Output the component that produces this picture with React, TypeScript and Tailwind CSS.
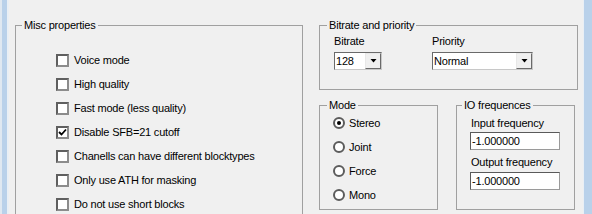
import React from "react";

const miscOptions = [
  { label: "Voice mode", checked: false },
  { label: "High quality", checked: false },
  { label: "Fast mode (less quality)", checked: false },
  { label: "Disable SFB=21 cutoff", checked: true },
  { label: "Chanells can have different blocktypes", checked: false },
  { label: "Only use ATH for masking", checked: false },
  { label: "Do not use short blocks", checked: false },
];

const modes = ["Stereo", "Joint", "Force", "Mono"];

const Check = ({ checked }: { checked: boolean }) => (
  <div className="flex h-[13px] w-[13px] shrink-0 items-center justify-center border-2 border-t-[#5f5f5f] border-l-[#5f5f5f] border-r-[#8c8c8c] border-b-[#8c8c8c] bg-white">
    {checked && (
      <svg width="9" height="9" viewBox="0 0 9 9">
        <path d="M1 4 L3.5 6.5 L8 1.5" stroke="#000" strokeWidth="1.8" fill="none" />
      </svg>
    )}
  </div>
);

const Radio = ({ checked }: { checked: boolean }) => (
  <div className="flex h-[12px] w-[12px] shrink-0 items-center justify-center rounded-full border-2 border-[#5c5c5c] bg-white">
    {checked && <div className="h-[4px] w-[4px] rounded-full bg-black" />}
  </div>
);

const Combo = ({ value, width }: { value: string; width: string }) => (
  <div className={`flex h-[18px] ${width} border border-t-[#6a6a6a] border-l-[#6a6a6a] border-r-[#c8c8c8] border-b-[#c8c8c8] bg-white`}>
    <div className="flex-1 pl-[1px] leading-[16px]">{value}</div>
    <div className="flex w-[16px] items-center justify-center border border-t-[#e8e8e8] border-l-[#e8e8e8] border-r-[#6a6a6a] border-b-[#6a6a6a] bg-[#f0f0f0]">
      <svg width="7" height="4" viewBox="0 0 7 4">
        <path d="M0.5 0 H6.5 L3.5 3.5 Z" fill="#000" />
      </svg>
    </div>
  </div>
);

const Edit = ({ value }: { value: string }) => (
  <div className="ml-[13px] h-[18px] w-[90px] border border-t-[#5a5a5a] border-l-[#5a5a5a] border-r-[#9a9a9a] border-b-[#9a9a9a] bg-white pl-[1px] leading-[16px]">
    {value}
  </div>
);

const Legend = ({ children, ml }: { children: React.ReactNode; ml: string }) => (
  <legend className={`${ml} px-[2px] leading-[13px]`}>{children}</legend>
);

export default function App() {
  return (
    <div className="flex h-[214px] w-[592px] overflow-hidden bg-[#f0f0f0] font-['Liberation_Sans',Arial,sans-serif] text-[11px] tracking-[-0.2px] text-black">
      <div className="flex w-[9px] shrink-0">
        <div className="w-[2px] bg-[#dfe8f1]" />
        <div className="w-[5px] bg-[#b9d1ea]" />
        <div className="w-[2px] bg-[#e9eff5]" />
      </div>

      <div className="flex flex-1 gap-[16px] pl-[6px] pt-[19px]">
        <fieldset className="h-[220px] w-[288px] shrink-0 border border-[#a0a0a0]">
          <Legend ml="ml-[6px]">Misc properties</Legend>
          <div className="mt-[16px] flex flex-col">
            {miscOptions.map((o) => (
              <div key={o.label} className="flex h-[24px] items-center gap-[5px] pl-[40px]">
                <Check checked={o.checked} />
                <span>{o.label}</span>
              </div>
            ))}
          </div>
        </fieldset>

        <div className="flex w-[259px] shrink-0 flex-col">
          <fieldset className="h-[71px] border border-[#a0a0a0]">
            <Legend ml="ml-[7px]">Bitrate and priority</Legend>
            <div className="flex pl-[14px]">
              <div className="flex w-[98px] flex-col">
                <div className="mt-[3px] leading-[13px]">Bitrate</div>
                <div className="mt-[4px]">
                  <Combo value="128" width="w-[48px]" />
                </div>
              </div>
              <div className="flex flex-col">
                <div className="mt-[3px] leading-[13px]">Priority</div>
                <div className="mt-[4px]">
                  <Combo value="Normal" width="w-[101px]" />
                </div>
              </div>
            </div>
          </fieldset>

          <div className="mt-[9px] flex gap-[18px]">
            <fieldset className="h-[111px] w-[119px] border border-[#a0a0a0]">
              <Legend ml="ml-[7px]">Mode</Legend>
              <div className="flex flex-col gap-[2px]">
                {modes.map((m, i) => (
                  <div key={m} className="flex h-[22px] items-center gap-[4px] pl-[13px]">
                    <Radio checked={i === 0} />
                    <span>{m}</span>
                  </div>
                ))}
              </div>
            </fieldset>

            <fieldset className="h-[111px] w-[119px] border border-[#a0a0a0]">
              <Legend ml="ml-[5px]">IO frequences</Legend>
              <div className="flex flex-col">
                <div className="ml-[14px] mt-[5px] leading-[13px]">Input frequency</div>
                <div className="mt-[2px]">
                  <Edit value="-1.000000" />
                </div>
                <div className="ml-[14px] mt-[6px] leading-[13px]">Output frequency</div>
                <div className="mt-[3px]">
                  <Edit value="-1.000000" />
                </div>
              </div>
            </fieldset>
          </div>
        </div>
      </div>

      <div className="flex w-[9px] shrink-0">
        <div className="w-[1px] bg-[#e9eff5]" />
        <div className="flex-1 bg-[#b9d1ea]" />
      </div>
    </div>
  );
}
